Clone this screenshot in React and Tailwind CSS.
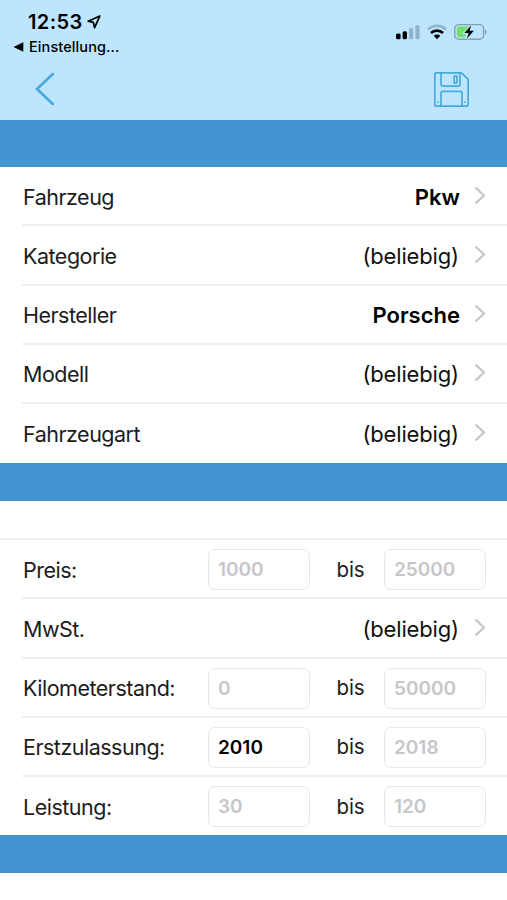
import React, { useState } from 'react';

const vehicleRows = [
  { label: 'Fahrzeug', value: 'Pkw', selected: true },
  { label: 'Kategorie', value: '(beliebig)' },
  { label: 'Hersteller', value: 'Porsche', selected: true },
  { label: 'Modell', value: '(beliebig)' },
  { label: 'Fahrzeugart', value: '(beliebig)' },
];

const StatusBar = () => (
  <div className="flex justify-between h-[60px] pl-[13px] pr-[19px] text-black">
    <div>
      <div className="flex items-center pl-[15px] mt-[10px] h-6">
        <span className="text-[20px] font-semibold leading-6 tracking-[0.4px]">12:53</span>
        <svg className="ml-[4px]" width="14" height="14" viewBox="0 0 14 14" fill="none" stroke="currentColor" strokeWidth="1.8" strokeLinejoin="round">
          <path d="M12.8 1 1.200 6.200 6.300 7.400l1.300 5.300z" />
        </svg>
      </div>
      <div className="flex items-center mt-[3px] h-5">
        <svg width="11" height="10" viewBox="0 0 11 10" fill="currentColor">
          <path d="M.5 5 10.300.3v9.400z" />
        </svg>
        <span className="ml-[5px] text-[14.5px] font-medium leading-5 tracking-[0.1px]">Einstellung...</span>
      </div>
    </div>

    <div className="flex items-start mt-[22px]">
      {/* signal */}
      <svg className="ml-px mt-[2px]" width="24" height="16" viewBox="0 0 24 16">
        <rect x="0" y="9.600" width="4.600" height="5.600" rx="1.500" fill="#000" />
        <rect x="6.600" y="7.200" width="4.400" height="8" rx="1.500" fill="#000" />
        <rect x="13" y="4" width="4.200" height="11.200" rx="1.500" fill="#91b4c8" />
        <rect x="19.400" y="1" width="4.200" height="14.200" rx="1.500" fill="#91b4c8" />
      </svg>
      {/* wifi */}
      <svg className="ml-[7px] mt-[2px]" width="20" height="16" viewBox="0 0 20 16" fill="none" strokeWidth="2.7">
        <path d="M1 5.500a13 13 0 0 1 18 0" stroke="#91b4c8" />
        <path d="M4 9a8.600 8.600 0 0 1 12 0" stroke="#000" />
        <path d="m10 15.200-3.300-3.400a4.700 4.700 0 0 1 6.600 0z" fill="#000" />
      </svg>
      {/* battery */}
      <svg className="ml-[7px] mt-[1px]" width="34" height="18" viewBox="0 0 34 18">
        <rect x=".8" y="1.600" width="28.800" height="14.600" rx="4" fill="none" stroke="#84a0b0" strokeWidth="1.4" />
        <path d="M4.800 3.600h9.600L11 14.200H4.800A2 2 0 0 1 2.800 12V5.600a2 2 0 0 1 2-2z" fill="#72e06b" />
        <path d="M31 6.400c2 .6 2 4.400 0 5z" fill="#84a0b0" />
        <path d="m17.200 2.300-6.800 7.700h4.200l-1.700 5.800 6.900-8h-4.200z" fill="#000" stroke="#bde6fe" strokeWidth="2" paintOrder="stroke" />
      </svg>
    </div>
  </div>
);

const NavBar = () => (
  <div className="flex justify-between h-[60px] pl-[35px] pr-[38px] text-[#48a9db]">
    <button type="button" aria-label="Zurück" className="self-start mt-3">
      <svg width="20" height="34" viewBox="0 0 20 34" fill="none" stroke="currentColor" strokeWidth="2.6" strokeLinecap="round">
        <path d="M17.800 2 2 17l15.800 15" />
      </svg>
    </button>
    <button type="button" aria-label="Speichern" className="self-start mt-3">
      <svg width="35" height="35" viewBox="0 0 35 35" fill="none" stroke="currentColor" strokeWidth="1.7" strokeLinejoin="round">
        <path d="M2.500.8h25l6.700 6.500v24.900q0 2-2 2H2.500q-1.700 0-1.700-1.700v-30q0-1.700 1.700-1.700z" />
        <path d="M7 .8v11.500q0 1.900 1.900 1.900h15.200q1.900 0 1.900-1.900V.8" />
        <path d="M20.200 4h2.700v6.800h-2.700z" />
        <path d="M7 34V21.200q0-1.900 1.900-1.900h17.200q1.900 0 1.900 1.900V34" />
        <path d="M3.400 30.200h1.400M30.200 30.200h1.400" />
      </svg>
    </button>
  </div>
);

const Row = ({ label, last, children }) => (
  <div className="h-[59.25px] pl-[22px]">
    <div className={`flex items-center h-full pl-px ${last ? '' : 'pt-[2px] border-b-2 border-[#efeff0]'}`}>
      <span className="w-[185px] shrink-0 text-[21.5px] leading-7 tracking-[-0.5px] text-[#1c1c1c]">{label}</span>
      {children}
    </div>
  </div>
);

const Choice = ({ value, selected }) => (
  <div className="flex flex-1 items-center justify-end pr-[21px]">
    <span className={`text-[22px] leading-7 ${selected ? 'font-semibold text-black' : 'mr-[1px] tracking-[-0.15px] text-[#111]'}`}>
      {value}
    </span>
    <svg className="ml-[14px] -mt-[3px]" width="12" height="19" viewBox="0 0 12 19" fill="none" stroke="#c5c5c7" strokeWidth="2.2">
      <path d="m1.500 1.500 8.500 8-8.500 8" />
    </svg>
  </div>
);

const Field = ({ placeholder, initial = '', label }) => {
  const [value, setValue] = useState(initial);

  return (
    <input
      type="text"
      inputMode="numeric"
      aria-label={label}
      value={value}
      placeholder={placeholder}
      onChange={(e) => setValue(e.target.value)}
      className="w-[102px] h-[41px] pl-[9px] bg-white border border-[#e8e8e9] rounded-[7px] text-[19px] font-semibold text-black placeholder:text-[#c6c6c8] focus:outline-none"
    />
  );
};

const Range = ({ label, from, to, initial }) => (
  <>
    <Field label={`${label} von`} placeholder={from} initial={initial} />
    <span className="w-[74px] pl-[7px] text-center text-[20.5px] leading-7 tracking-[-0.1px] text-[#1c1c1c]">bis</span>
    <Field label={`${label} bis`} placeholder={to} />
  </>
);

export default function App() {
  return (
    <div className="w-[507px] h-[900px] overflow-hidden bg-white font-['Inter',sans-serif]">
      <header className="h-[120px] bg-[#bde6fe]">
        <StatusBar />
        <NavBar />
      </header>

      <div className="h-[47px] bg-[#4295d1]" />
      <section className="h-[296px]">
        {vehicleRows.map((row, i) => (
          <Row key={row.label} label={row.label} last={i === vehicleRows.length - 1}>
            <Choice value={row.value} selected={row.selected} />
          </Row>
        ))}
      </section>

      <div className="h-[38px] bg-[#4295d1]" />
      <div className="h-[39px] border-b-2 border-[#efeff0]" />
      <section className="h-[295px]">
        <Row label="Preis:">
          <Range label="Preis" from="1000" to="25000" />
        </Row>
        <Row label="MwSt.">
          <Choice value="(beliebig)" />
        </Row>
        <Row label="Kilometerstand:">
          <Range label="Kilometerstand" from="0" to="50000" />
        </Row>
        <Row label="Erstzulassung:">
          <Range label="Erstzulassung" from="2005" to="2018" initial="2010" />
        </Row>
        <Row label="Leistung:" last>
          <Range label="Leistung" from="30" to="120" />
        </Row>
      </section>
      <div className="h-[38px] bg-[#4295d1]" />
    </div>
  );
}
